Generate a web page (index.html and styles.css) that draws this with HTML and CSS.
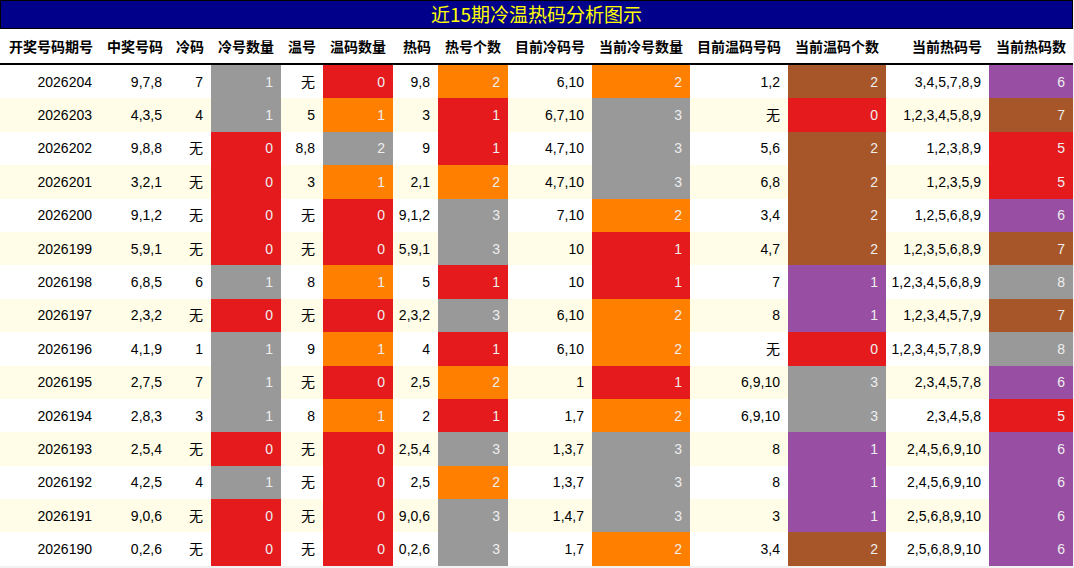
FILE: index.html
```html
<!DOCTYPE html>
<html lang="zh">
<head>
<meta charset="utf-8">
<title>近15期冷温热码分析图示</title>
<link rel="stylesheet" href="styles.css">
</head>
<body>
<div class="wrap">
  <div class="title">近15期冷温热码分析图示</div>
  <table class="grid">
    <colgroup>
      <col class="w100"><col class="w70"><col class="w41"><col class="w70"><col class="w42"><col class="w70"><col class="w45"><col class="w70"><col class="w84"><col class="w98"><col class="w98"><col class="w98"><col class="w103"><col class="w84">
    </colgroup>
    <thead>
      <tr>
        <th>开奖号码期号</th><th>中奖号码</th><th>冷码</th><th>冷号数量</th><th>温号</th><th>温码数量</th><th>热码</th><th>热号个数</th><th>目前冷码号</th><th>当前冷号数量</th><th>目前温码号码</th><th>当前温码个数</th><th>当前热码号</th><th>当前热码数</th>
      </tr>
    </thead>
    <tbody>
      <tr><td>2026204</td><td>9,7,8</td><td>7</td><td class="c gray">1</td><td>无</td><td class="c red">0</td><td>9,8</td><td class="c orange">2</td><td>6,10</td><td class="c orange">2</td><td>1,2</td><td class="c brown">2</td><td>3,4,5,7,8,9</td><td class="c purple">6</td></tr>
      <tr><td>2026203</td><td>4,3,5</td><td>4</td><td class="c gray">1</td><td>5</td><td class="c orange">1</td><td>3</td><td class="c red">1</td><td>6,7,10</td><td class="c gray">3</td><td>无</td><td class="c red">0</td><td>1,2,3,4,5,8,9</td><td class="c brown">7</td></tr>
      <tr><td>2026202</td><td>9,8,8</td><td>无</td><td class="c red">0</td><td>8,8</td><td class="c gray">2</td><td>9</td><td class="c red">1</td><td>4,7,10</td><td class="c gray">3</td><td>5,6</td><td class="c brown">2</td><td>1,2,3,8,9</td><td class="c red">5</td></tr>
      <tr><td>2026201</td><td>3,2,1</td><td>无</td><td class="c red">0</td><td>3</td><td class="c orange">1</td><td>2,1</td><td class="c orange">2</td><td>4,7,10</td><td class="c gray">3</td><td>6,8</td><td class="c brown">2</td><td>1,2,3,5,9</td><td class="c red">5</td></tr>
      <tr><td>2026200</td><td>9,1,2</td><td>无</td><td class="c red">0</td><td>无</td><td class="c red">0</td><td>9,1,2</td><td class="c gray">3</td><td>7,10</td><td class="c orange">2</td><td>3,4</td><td class="c brown">2</td><td>1,2,5,6,8,9</td><td class="c purple">6</td></tr>
      <tr><td>2026199</td><td>5,9,1</td><td>无</td><td class="c red">0</td><td>无</td><td class="c red">0</td><td>5,9,1</td><td class="c gray">3</td><td>10</td><td class="c red">1</td><td>4,7</td><td class="c brown">2</td><td>1,2,3,5,6,8,9</td><td class="c brown">7</td></tr>
      <tr><td>2026198</td><td>6,8,5</td><td>6</td><td class="c gray">1</td><td>8</td><td class="c orange">1</td><td>5</td><td class="c red">1</td><td>10</td><td class="c red">1</td><td>7</td><td class="c purple">1</td><td>1,2,3,4,5,6,8,9</td><td class="c gray">8</td></tr>
      <tr><td>2026197</td><td>2,3,2</td><td>无</td><td class="c red">0</td><td>无</td><td class="c red">0</td><td>2,3,2</td><td class="c gray">3</td><td>6,10</td><td class="c orange">2</td><td>8</td><td class="c purple">1</td><td>1,2,3,4,5,7,9</td><td class="c brown">7</td></tr>
      <tr><td>2026196</td><td>4,1,9</td><td>1</td><td class="c gray">1</td><td>9</td><td class="c orange">1</td><td>4</td><td class="c red">1</td><td>6,10</td><td class="c orange">2</td><td>无</td><td class="c red">0</td><td>1,2,3,4,5,7,8,9</td><td class="c gray">8</td></tr>
      <tr><td>2026195</td><td>2,7,5</td><td>7</td><td class="c gray">1</td><td>无</td><td class="c red">0</td><td>2,5</td><td class="c orange">2</td><td>1</td><td class="c red">1</td><td>6,9,10</td><td class="c gray">3</td><td>2,3,4,5,7,8</td><td class="c purple">6</td></tr>
      <tr><td>2026194</td><td>2,8,3</td><td>3</td><td class="c gray">1</td><td>8</td><td class="c orange">1</td><td>2</td><td class="c red">1</td><td>1,7</td><td class="c orange">2</td><td>6,9,10</td><td class="c gray">3</td><td>2,3,4,5,8</td><td class="c red">5</td></tr>
      <tr><td>2026193</td><td>2,5,4</td><td>无</td><td class="c red">0</td><td>无</td><td class="c red">0</td><td>2,5,4</td><td class="c gray">3</td><td>1,3,7</td><td class="c gray">3</td><td>8</td><td class="c purple">1</td><td>2,4,5,6,9,10</td><td class="c purple">6</td></tr>
      <tr><td>2026192</td><td>4,2,5</td><td>4</td><td class="c gray">1</td><td>无</td><td class="c red">0</td><td>2,5</td><td class="c orange">2</td><td>1,3,7</td><td class="c gray">3</td><td>8</td><td class="c purple">1</td><td>2,4,5,6,9,10</td><td class="c purple">6</td></tr>
      <tr><td>2026191</td><td>9,0,6</td><td>无</td><td class="c red">0</td><td>无</td><td class="c red">0</td><td>9,0,6</td><td class="c gray">3</td><td>1,4,7</td><td class="c gray">3</td><td>3</td><td class="c purple">1</td><td>2,5,6,8,9,10</td><td class="c purple">6</td></tr>
      <tr><td>2026190</td><td>0,2,6</td><td>无</td><td class="c red">0</td><td>无</td><td class="c red">0</td><td>0,2,6</td><td class="c gray">3</td><td>1,7</td><td class="c orange">2</td><td>3,4</td><td class="c brown">2</td><td>2,5,6,8,9,10</td><td class="c purple">6</td></tr>
    </tbody>
  </table>
</div>
</body>
</html>
```

FILE: styles.css
```css
html, body {
  margin: 0;
  padding: 0;
  background: #f2f2f2;
}
body {
  font-family: "Liberation Sans", Arial, "Noto Sans CJK SC", sans-serif;
  font-size: 14px;
  color: #000;
}
.wrap {
  width: 1073px;
  background: #fff;
}
.title {
  box-sizing: border-box;
  height: 29px;
  border: 1px solid #000;
  background: #00008b;
  color: #ffff00;
  font-family: "Noto Sans CJK SC", "Liberation Sans", sans-serif;
  font-size: 19px;
  line-height: 26px;
  text-align: center;
}
.grid {
  width: 1073px;
  table-layout: fixed;
  border-collapse: separate;
  border-spacing: 0;
}
.w100 { width: 100px; }
.w70 { width: 70px; }
.w41 { width: 41px; }
.w42 { width: 42px; }
.w45 { width: 45px; }
.w84 { width: 84px; }
.w98 { width: 98px; }
.w103 { width: 103px; }
.grid th {
  height: 34px;
  padding: 0 7px 0 0;
  border-bottom: 2px solid #000;
  background: #fff;
  font-family: "Noto Sans CJK SC", "Liberation Sans", sans-serif;
  font-weight: bold;
  font-size: 14px;
  text-align: right;
  white-space: nowrap;
  overflow: hidden;
}
.grid td {
  height: 33.4px;
  padding: 0 8px 0 0;
  text-align: right;
  white-space: nowrap;
  line-height: 16px;
  overflow: hidden;
}
.grid tbody tr:nth-child(even) td {
  background: #fffde8;
}
.grid tbody tr td.c {
  color: #eeeeee;
}
.grid tbody tr td.gray { background: #999999; }
.grid tbody tr td.red { background: #e41a1c; }
.grid tbody tr td.orange { background: #ff7f00; }
.grid tbody tr td.brown { background: #a65628; }
.grid tbody tr td.purple { background: #984ea3; }
```
